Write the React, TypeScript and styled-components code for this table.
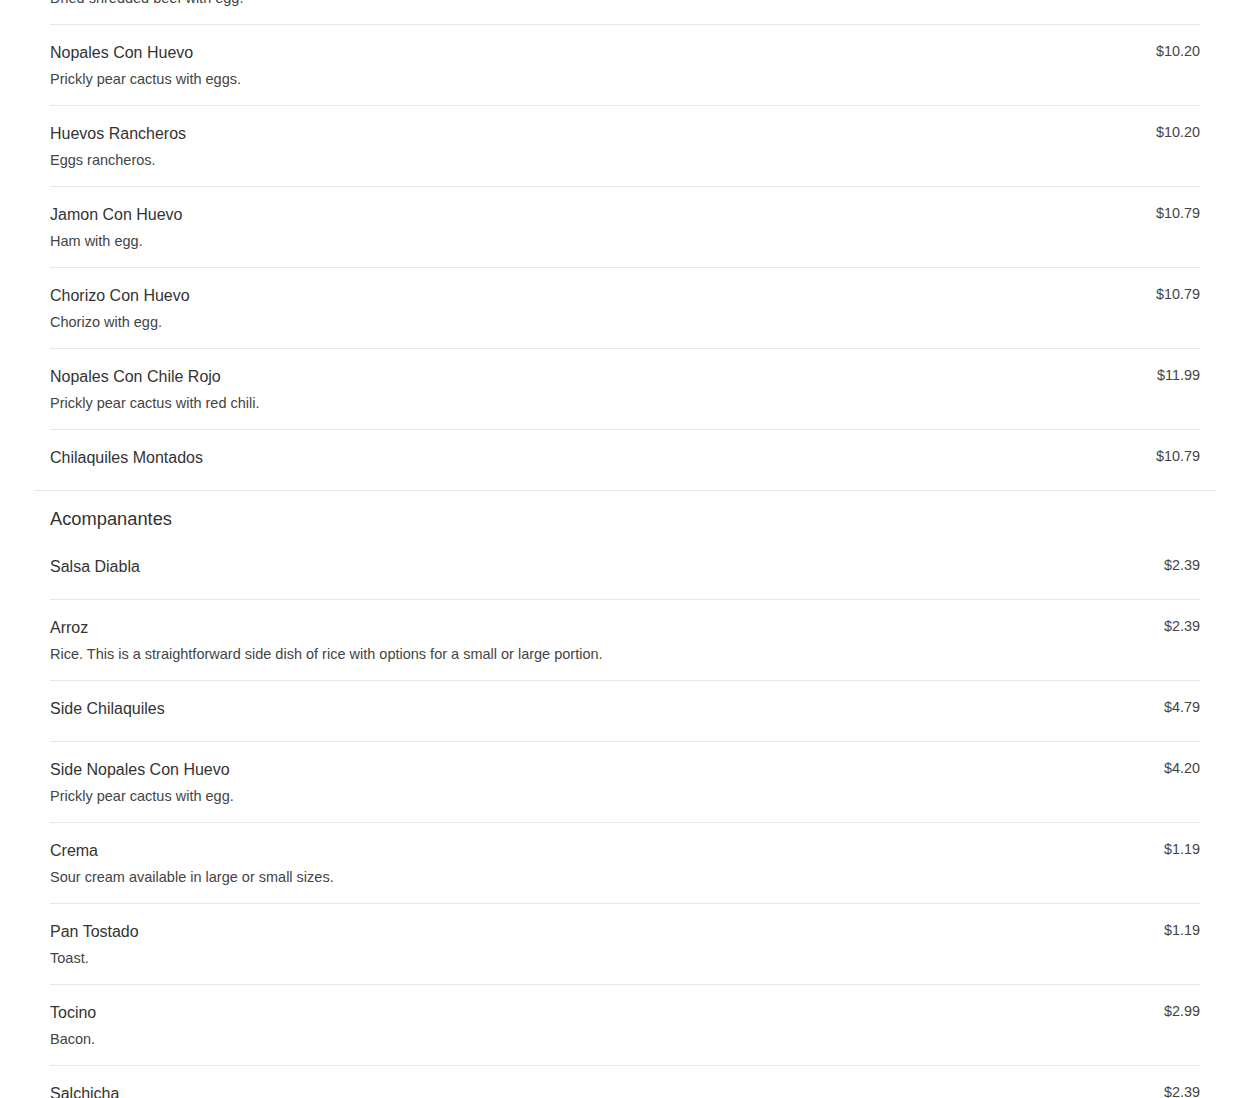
import styled, { createGlobalStyle } from "styled-components";

type Item = { name: string; desc?: string; price: string };
type Section = { title?: string; items: Item[] };

const sections: Section[] = [
  {
    items: [
      { name: "Machaca Con Huevo", desc: "Dried shredded beef with egg.", price: "$10.79" },
      { name: "Nopales Con Huevo", desc: "Prickly pear cactus with eggs.", price: "$10.20" },
      { name: "Huevos Rancheros", desc: "Eggs rancheros.", price: "$10.20" },
      { name: "Jamon Con Huevo", desc: "Ham with egg.", price: "$10.79" },
      { name: "Chorizo Con Huevo", desc: "Chorizo with egg.", price: "$10.79" },
      { name: "Nopales Con Chile Rojo", desc: "Prickly pear cactus with red chili.", price: "$11.99" },
      { name: "Chilaquiles Montados", price: "$10.79" },
    ],
  },
  {
    title: "Acompanantes",
    items: [
      { name: "Salsa Diabla", price: "$2.39" },
      {
        name: "Arroz",
        desc: "Rice. This is a straightforward side dish of rice with options for a small or large portion.",
        price: "$2.39",
      },
      { name: "Side Chilaquiles", price: "$4.79" },
      { name: "Side Nopales Con Huevo", desc: "Prickly pear cactus with egg.", price: "$4.20" },
      { name: "Crema", desc: "Sour cream available in large or small sizes.", price: "$1.19" },
      { name: "Pan Tostado", desc: "Toast.", price: "$1.19" },
      { name: "Tocino", desc: "Bacon.", price: "$2.99" },
      { name: "Salchicha", desc: "Sausage.", price: "$2.39" },
    ],
  },
];

export default function App() {
  return (
    <>
      <GlobalStyle />
      <Page>
        {sections.map((section, si) => (
          <MenuSection key={si} $last={si === sections.length - 1}>
            {section.title && <SectionTitle>{section.title}</SectionTitle>}
            {section.items.map((item, ii) => (
              <Row key={item.name} $last={ii === section.items.length - 1}>
                <Info>
                  <Name>{item.name}</Name>
                  {item.desc && <Desc>{item.desc}</Desc>}
                </Info>
                <Price>{item.price}</Price>
              </Row>
            ))}
          </MenuSection>
        ))}
      </Page>
    </>
  );
}

const GlobalStyle = createGlobalStyle`
  html, body {
    margin: 0;
    padding: 0;
    background: #fff;
    overflow: hidden;
  }
  body {
    font-family: "Liberation Sans", Arial, sans-serif;
    color: #333;
  }
`;

/* the menu is shown scrolled, so the first row sits partly above the top */
const Page = styled.div`
  padding: 0 34px;
  margin-top: -56px;
`;

const MenuSection = styled.section<{ $last: boolean }>`
  padding: 0 16px;
  border-bottom: ${(p) => (p.$last ? "none" : "1px solid #e8e8e8")};
`;

const SectionTitle = styled.h2`
  margin: 0;
  padding: 16px 0 8px;
  font-size: 18.3px;
  line-height: 24px;
  font-weight: 400;
  color: #333;
`;

const Row = styled.div<{ $last: boolean }>`
  display: flex;
  justify-content: space-between;
  align-items: flex-start;
  min-height: 26px;
  padding: 18px 0 16px;
  border-bottom: ${(p) => (p.$last ? "none" : "1px solid #e8e8e8")};
`;

const Info = styled.div`
  display: flex;
  flex-direction: column;
  gap: 6px;
`;

const Name = styled.div`
  font-size: 16px;
  line-height: 20px;
  color: #333;
`;

const Desc = styled.div`
  font-size: 14.5px;
  line-height: 20px;
  color: #444;
`;

const Price = styled.div`
  font-size: 14.4px;
  line-height: 16px;
  color: #444;
  white-space: nowrap;
`;
